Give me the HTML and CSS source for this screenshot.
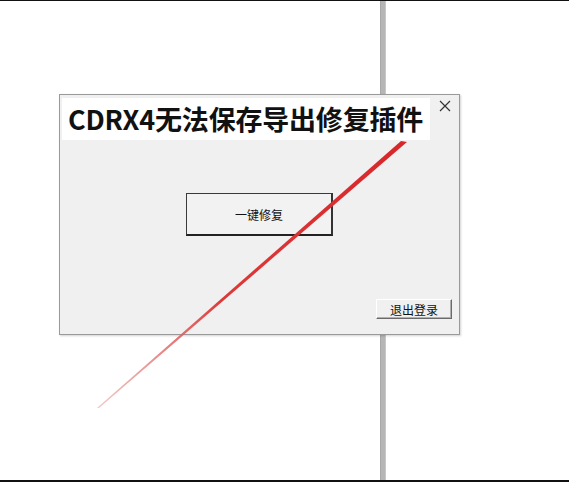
FILE: index.html
```html
<!DOCTYPE html>
<html lang="zh">
<head>
<meta charset="utf-8">
<link rel="stylesheet" href="styles.css">
</head>
<body>
<div class="page">
  <div class="vbar"></div>
  <div class="dialog">
    <div class="header">
      <div class="title">CDRX4无法保存导出修复插件</div>
      <div class="close">
        <svg width="12" height="12" viewBox="0 0 12 12"><path d="M1 1 L11 11 M11 1 L1 11" stroke="#333" stroke-width="1.2" fill="none"/></svg>
      </div>
    </div>
    <div class="main">
      <div class="btn-primary">一键修复</div>
    </div>
    <div class="footer">
      <div class="btn-small">退出登录</div>
    </div>
  </div>
  <svg class="redline" width="569" height="482" viewBox="0 0 569 482">
    <defs>
      <linearGradient id="g" x1="405" y1="141" x2="98" y2="408" gradientUnits="userSpaceOnUse">
        <stop offset="0" stop-color="#d8262a"/>
        <stop offset="0.6" stop-color="#dc3a3a"/>
        <stop offset="1" stop-color="#e8a0a0" stop-opacity="0.6"/>
      </linearGradient>
    </defs>
    <polygon points="401,141 407,142 99,408 97,408" fill="url(#g)"/>
  </svg>
</div>
</body>
</html>
```
FILE: styles.css
```css
html, body {
  margin: 0;
  padding: 0;
  background: #ffffff;
}
.page {
  position: relative;
  width: 569px;
  height: 482px;
  box-sizing: border-box;
  border-top: 1px solid #111;
  border-bottom: 2px solid #111;
  overflow: hidden;
  font-family: "Noto Sans CJK SC", "Noto Sans", sans-serif;
}
.vbar {
  position: absolute;
  left: 380px;
  top: 0;
  width: 6px;
  height: 100%;
  background: #b6b6b6;
  border-left: 1px solid #a8a8a8;
  border-right: 1px solid #c8c8c8;
  box-sizing: border-box;
}
.dialog {
  position: absolute;
  left: 59px;
  top: 93px;
  width: 401px;
  height: 241px;
  box-sizing: border-box;
  background: #f0f0f0;
  border: 1px solid #9a9a9a;
  box-shadow: 1px 1px 2px rgba(0,0,0,0.18);
  display: flex;
  flex-direction: column;
}
.header {
  display: flex;
  align-items: flex-start;
  height: 45px;
}
.title {
  margin: 3px 0 0 2px;
  width: 368px;
  height: 42px;
  line-height: 42px;
  background: #ffffff;
  box-sizing: border-box;
  padding-left: 6px;
  font-size: 27px;
  font-weight: 700;
  color: #111;
  white-space: nowrap;
  letter-spacing: -0.2px;
}
.close {
  margin: 5px 0 0 9px;
  width: 12px;
  height: 12px;
  display: flex;
}
.main {
  display: flex;
  justify-content: center;
  margin-top: 53px;
}
.btn-primary {
  width: 147px;
  height: 43px;
  box-sizing: border-box;
  border: 1px solid #3a3a3a;
  border-bottom: 2px solid #222;
  border-right: 2px solid #333;
  background: #f2f2f2;
  display: flex;
  align-items: center;
  justify-content: center;
  font-size: 12px;
  color: #111;
}
.footer {
  display: flex;
  justify-content: flex-end;
  margin-top: 63px;
  padding-right: 7px;
}
.btn-small {
  width: 76px;
  height: 20px;
  box-sizing: border-box;
  border-top: 1px solid #ffffff;
  border-left: 1px solid #ffffff;
  border-right: 1px solid #6a6a6a;
  border-bottom: 1px solid #6a6a6a;
  box-shadow: inset -1px -1px 0 #b0b0b0;
  background: #f0f0f0;
  display: flex;
  align-items: center;
  justify-content: center;
  font-size: 12px;
  color: #111;
}
.redline {
  position: absolute;
  left: 0;
  top: -1px;
  pointer-events: none;
}
```
